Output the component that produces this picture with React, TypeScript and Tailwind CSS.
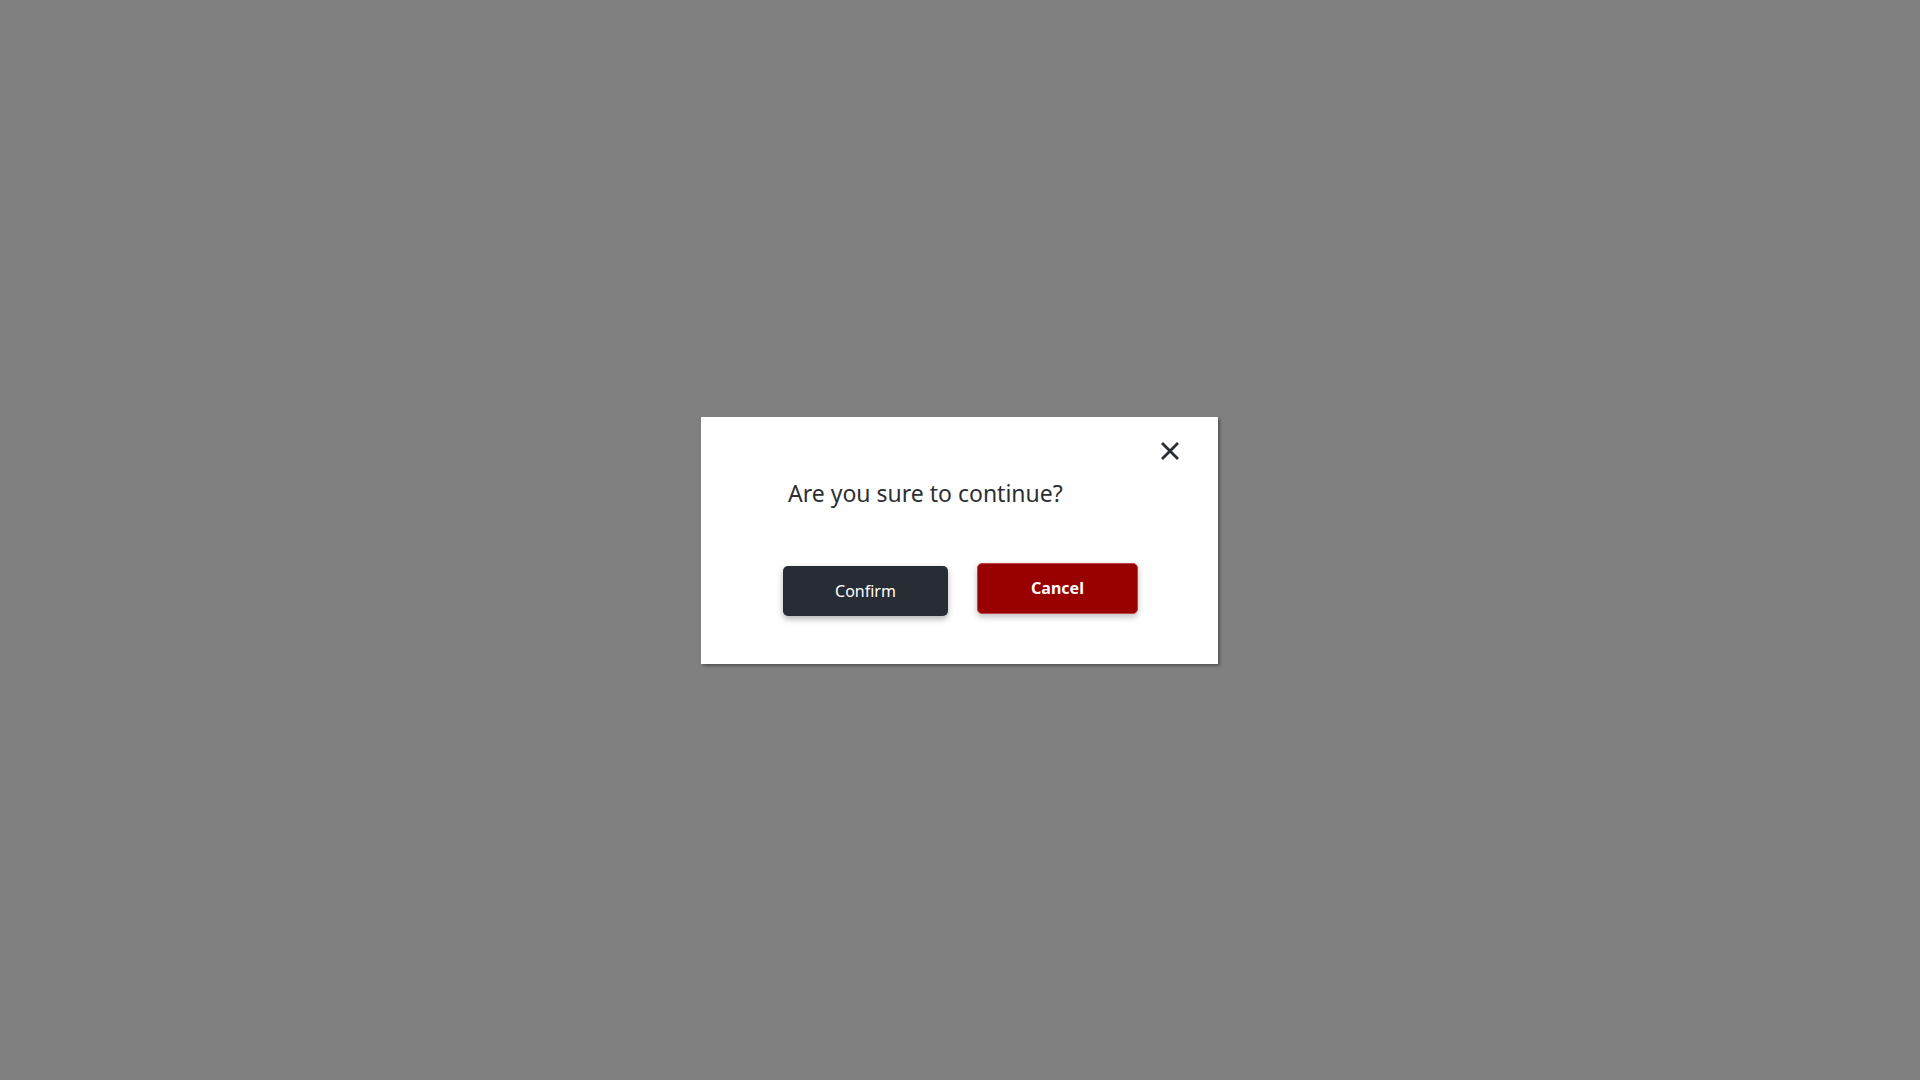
import React from 'react';

const font = { fontFamily: '"Noto Sans", "Open Sans", sans-serif' };

const CloseIcon: React.FC = () => (
  <svg width="20" height="20" viewBox="0 0 20 20" fill="none" stroke="#2a2d33" strokeWidth="2.8" strokeLinecap="butt">
    <path d="M2 2 L18 18 M18 2 L2 18" />
  </svg>
);

export default function App() {
  return (
    <div className="w-[1920px] h-[1080px] bg-[#808080] flex items-center justify-center" style={font}>
      {/* Dialog */}
      <div className="relative w-[517px] h-[247px] -ml-px bg-white shadow-[2px_2px_3px_rgba(0,0,0,0.35)] flex flex-col">
        <button className="absolute top-[24px] right-[38px] p-0 cursor-pointer" aria-label="Close">
          <CloseIcon />
        </button>

        <p className="mt-[60px] ml-[87px] text-[23px] leading-[32px] text-[#2d2f33]">Are you sure to continue?</p>

        <div className="mt-[54px] ml-[82px] flex items-start gap-[29px]">
          <button className="mt-[3px] w-[165px] h-[50px] rounded-[5px] bg-[#282c35] text-white text-[16px] shadow-[0_3px_6px_rgba(0,0,0,0.3)]">
            Confirm
          </button>
          <button className="w-[161px] h-[51px] rounded-[5px] bg-[#990000] border border-[#b44] text-white text-[16px] font-bold shadow-[0_3px_6px_rgba(0,0,0,0.25)]">
            Cancel
          </button>
        </div>
      </div>
    </div>
  );
}
